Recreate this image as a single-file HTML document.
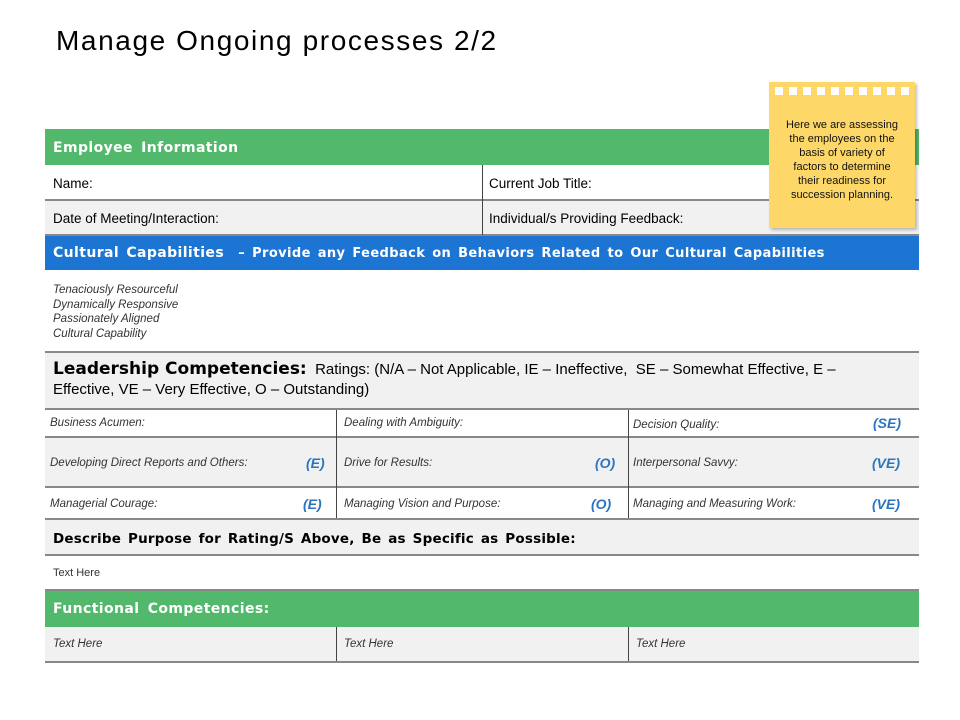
<!DOCTYPE html>
<html><head><meta charset="utf-8"><style>
body{margin:0;width:960px;height:720px;background:#fff;font-family:"Liberation Sans",sans-serif;position:relative;overflow:hidden}
.a{position:absolute}
h1{position:absolute;left:56px;top:25px;margin:0;font-weight:normal;font-size:28px;letter-spacing:1.6px;color:#000}
.row{position:absolute;left:45px;width:874px;border-bottom:2px solid #888;box-sizing:border-box}
.g{background:#52b86c;color:#fff;font-weight:bold;font-family:"DejaVu Sans",sans-serif;font-size:14px;letter-spacing:0.4px;word-spacing:3px}
.gray{background:#f1f1f1}
.t{position:absolute;font-size:13.5px;color:#000}
.i{position:absolute;font-size:11.5px;font-style:italic;color:#333}
.v{position:absolute;font-size:14px;font-style:italic;font-weight:bold;color:#2a74c0}
.vl{position:absolute;width:1px;background:#444}
</style></head><body>
<h1>Manage Ongoing processes 2/2</h1>
<div class="row g" style="top:129px;height:36px;border:none"><span class="a" style="left:8px;top:11px">Employee Information</span></div>
<div class="row" style="top:165px;height:36px"><span class="t" style="left:8px;top:11px">Name:</span><span class="t" style="left:444px;top:11px">Current Job Title:</span></div>
<div class="row gray" style="top:201px;height:35px"><span class="t" style="left:8px;top:10px">Date of Meeting/Interaction:</span><span class="t" style="left:444px;top:10px">Individual/s Providing Feedback:</span></div>
<div class="vl" style="left:482px;top:165px;height:70px"></div>
<div class="row" style="top:236px;height:34px;background:#1c75d3;color:#fff;font-weight:bold;font-family:'DejaVu Sans',sans-serif;border:none;letter-spacing:0.4px;word-spacing:2px"><span class="a" style="left:8px;top:9px;font-size:14px">Cultural Capabilities <span style="font-size:13px">&nbsp;– Provide any Feedback on Behaviors Related to Our Cultural Capabilities</span></span></div>
<div class="row" style="top:270px;height:83px"><div class="i" style="left:8px;top:13px;line-height:14.5px;font-size:11.5px">Tenaciously Resourceful<br>Dynamically Responsive<br>Passionately Aligned<br>Cultural Capability</div></div>
<div class="row gray" style="top:353px;height:57px"><div class="a" style="left:8px;top:6px;font-size:15px;line-height:20px;width:830px"><b style="font-size:17px;font-family:'DejaVu Sans',sans-serif">Leadership Competencies:</b> &nbsp;Ratings: (N/A – Not Applicable, IE – Ineffective, &nbsp;SE – Somewhat Effective, E – Effective, VE – Very Effective, O – Outstanding)</div></div>
<div class="row" style="top:410px;height:28px"><span class="i" style="left:5px;top:7px">Business Acumen:</span><span class="i" style="left:299px;top:7px">Dealing with Ambiguity:</span><span class="i" style="left:588px;top:9px">Decision Quality:</span><span class="v" style="left:828px;top:5px">(SE)</span></div>
<div class="row gray" style="top:438px;height:50px"><span class="i" style="left:5px;top:19px">Developing Direct Reports and Others:</span><span class="v" style="left:261px;top:17px">(E)</span><span class="i" style="left:299px;top:19px">Drive for Results:</span><span class="v" style="left:550px;top:17px">(O)</span><span class="i" style="left:588px;top:19px">Interpersonal Savvy:</span><span class="v" style="left:827px;top:17px">(VE)</span></div>
<div class="row" style="top:488px;height:32px"><span class="i" style="left:5px;top:10px">Managerial Courage:</span><span class="v" style="left:258px;top:8px">(E)</span><span class="i" style="left:299px;top:10px">Managing Vision and Purpose:</span><span class="v" style="left:546px;top:8px">(O)</span><span class="i" style="left:588px;top:10px">Managing and Measuring Work:</span><span class="v" style="left:827px;top:8px">(VE)</span></div>
<div class="vl" style="left:336px;top:410px;height:108px"></div>
<div class="vl" style="left:628px;top:410px;height:108px"></div>
<div class="row gray" style="top:520px;height:36px"><span class="a" style="left:8px;top:11px;font-weight:bold;font-size:13.5px;font-family:'DejaVu Sans',sans-serif;letter-spacing:0.2px;word-spacing:2px">Describe Purpose for Rating/S Above, Be as Specific as Possible:</span></div>
<div class="row" style="top:556px;height:35px"><span class="a" style="left:8px;top:11px;font-size:11px;color:#333">Text Here</span></div>
<div class="row g" style="top:591px;height:36px;border:none"><span class="a" style="left:8px;top:10px">Functional Competencies:</span></div>
<div class="row gray" style="top:627px;height:36px"><span class="i" style="left:8px;top:11px">Text Here</span><span class="i" style="left:299px;top:11px">Text Here</span><span class="i" style="left:591px;top:11px">Text Here</span></div>
<div class="vl" style="left:336px;top:627px;height:34px"></div>
<div class="vl" style="left:628px;top:627px;height:34px"></div>
<div class="a" style="left:769px;top:82px;width:146px;height:146px;background:#fdd868;box-shadow:2px 2px 3px rgba(0,0,0,.25)">
<div class="a" style="left:6px;top:5px;width:136px;height:8px;background:repeating-linear-gradient(90deg,#fff 0 8px,transparent 8px 14px)"></div>
<div class="a" style="left:14px;top:36px;width:118px;text-align:center;font-size:11px;line-height:14px;color:#111">Here we are assessing the employees on the basis of variety of factors to determine their readiness for succession planning.</div></div>
</body></html>
